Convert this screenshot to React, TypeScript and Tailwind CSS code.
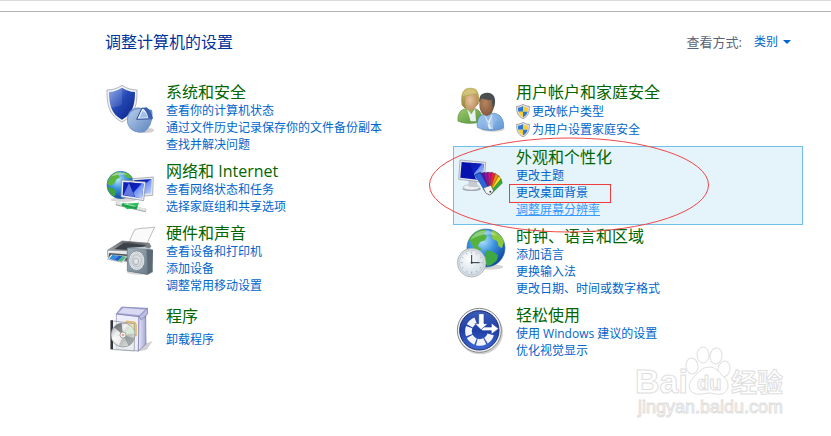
import type { ReactNode } from "react";

const linkClass = "text-[#0066cc] hover:text-[#3399ff] hover:underline";

function Icon({ viewBox, children }: { viewBox: string; children: ReactNode }) {
  return (
    <svg viewBox={viewBox} className="w-12 h-[54px] shrink-0 overflow-visible" aria-hidden="true">
      {children}
    </svg>
  );
}

function Gradients() {
  return (
    <svg className="absolute w-0 h-0" aria-hidden="true">
      <defs>
        <linearGradient id="shield" x1="0" y1="0" x2="1" y2="1">
          <stop offset="0" stopColor="#7f9fe6" />
          <stop offset=".45" stopColor="#2448b4" />
          <stop offset="1" stopColor="#0a1f86" />
        </linearGradient>
        <linearGradient id="pie" x1="0" y1="0" x2="1" y2="1">
          <stop offset="0" stopColor="#b9d0ee" />
          <stop offset="1" stopColor="#5f86bf" />
        </linearGradient>
        <radialGradient id="globe" cx=".4" cy=".3" r=".75">
          <stop offset="0" stopColor="#b5e6fb" />
          <stop offset=".45" stopColor="#3a92de" />
          <stop offset="1" stopColor="#0c3f9c" />
        </radialGradient>
        <linearGradient id="screen" x1="0" y1="0" x2="1" y2="1">
          <stop offset="0" stopColor="#0a1aa0" />
          <stop offset=".45" stopColor="#0d22c4" />
          <stop offset=".5" stopColor="#6f90f0" />
          <stop offset="1" stopColor="#c6d8ff" />
        </linearGradient>
        <linearGradient id="metal" x1="0" y1="0" x2="0" y2="1">
          <stop offset="0" stopColor="#f7f7f7" />
          <stop offset="1" stopColor="#a9adb2" />
        </linearGradient>
        <linearGradient id="printer" x1="0" y1="0" x2="1" y2="0">
          <stop offset="0" stopColor="#a4a9ae" />
          <stop offset=".5" stopColor="#4e545a" />
          <stop offset="1" stopColor="#85898e" />
        </linearGradient>
        <linearGradient id="speaker" x1="0" y1="0" x2="1" y2="1">
          <stop offset="0" stopColor="#a3b1bd" />
          <stop offset="1" stopColor="#6d7d8b" />
        </linearGradient>
        <radialGradient id="cone" cx=".5" cy=".5" r=".5">
          <stop offset="0" stopColor="#9aa3aa" />
          <stop offset=".4" stopColor="#e6eaec" />
          <stop offset=".75" stopColor="#c0c7cc" />
          <stop offset="1" stopColor="#f4f6f7" />
        </radialGradient>
        <linearGradient id="disc" x1="0" y1="0" x2="1" y2="1">
          <stop offset="0" stopColor="#8f9399" />
          <stop offset=".35" stopColor="#f4f4f4" />
          <stop offset=".6" stopColor="#b9bdb9" />
          <stop offset="1" stopColor="#f2f2f4" />
        </linearGradient>
        <linearGradient id="box" x1="0" y1="0" x2="1" y2="0">
          <stop offset="0" stopColor="#e9e9fb" />
          <stop offset="1" stopColor="#a5a6d4" />
        </linearGradient>
        <radialGradient id="faceLight" cx=".4" cy=".4" r=".7">
          <stop offset="0" stopColor="#e6c39b" />
          <stop offset="1" stopColor="#b98a5c" />
        </radialGradient>
        <radialGradient id="faceDark" cx=".4" cy=".4" r=".7">
          <stop offset="0" stopColor="#b58560" />
          <stop offset="1" stopColor="#7c5236" />
        </radialGradient>
        <linearGradient id="hair" x1="0" y1="0" x2="0" y2="1">
          <stop offset="0" stopColor="#c9bb6a" />
          <stop offset="1" stopColor="#96853a" />
        </linearGradient>
        <linearGradient id="green" x1="0" y1="0" x2="1" y2="1">
          <stop offset="0" stopColor="#9ccb6c" />
          <stop offset="1" stopColor="#54913a" />
        </linearGradient>
        <linearGradient id="blue" x1="0" y1="0" x2="1" y2="1">
          <stop offset="0" stopColor="#a9cdf2" />
          <stop offset="1" stopColor="#5f96d4" />
        </linearGradient>
        <radialGradient id="clock" cx=".4" cy=".35" r=".7">
          <stop offset="0" stopColor="#ffffff" />
          <stop offset="1" stopColor="#cfdbe4" />
        </radialGradient>
        <linearGradient id="ease" x1="0" y1="0" x2="0" y2="1">
          <stop offset="0" stopColor="#3c5cb8" />
          <stop offset=".5" stopColor="#1f3fa6" />
          <stop offset="1" stopColor="#3f68d4" />
        </linearGradient>
      </defs>
    </svg>
  );
}

function SecurityIcon() {
  return (
    <Icon viewBox="48 21 144 162">
      <ellipse cx="165" cy="166" rx="28" ry="8" fill="#000" opacity=".18" />
      <path d="M96 31c13 9 28 14 45 14 1 42-6 77-45 96-39-19-46-54-45-96 17 0 32-5 45-14z" fill="#f1f3f6" stroke="#8c929b" strokeWidth="2" />
      <path d="M96 38c12 8 25 12 39 13 0 36-6 66-39 83-33-17-39-47-39-83 14-1 27-5 39-13z" fill="url(#shield)" />
      <path d="M57 51c14-1 27-5 39-13v50c-14 8-27 10-36 9-2-14-3-29-3-46z" fill="#fff" opacity=".12" />
      <path d="M118 110c10-12 26-15 38-11l30 6c5 22-2 50-22 66-20 5-42-2-50-22-4-15-3-29 4-39z" fill="#6d90c4" />
      <circle cx="147" cy="136" r="35" fill="url(#pie)" stroke="#7294c6" strokeWidth="2" />
      <path d="M140 133l16-34c14 2 28 14 31 32z" fill="#dfeafa" stroke="#27499c" strokeWidth="3" />
      <path d="M158 99l11-2c10 5 17 17 18 34l-12-2c-3-14-9-24-17-30z" fill="#3a5eae" />
      <path d="M149 128l9-20c9 4 12 12 15 19z" fill="#9fbfe8" />
    </Icon>
  );
}

function NetworkIcon() {
  return (
    <Icon viewBox="48 258 144 162">
      <ellipse cx="100" cy="374" rx="38" ry="7" fill="#000" opacity=".15" />
      <circle cx="92" cy="330" r="41" fill="url(#globe)" stroke="#3171ae" strokeWidth="2" />
      <path d="M57 311c6-11 15-18 26-21l10 4-8 7 5 6-12 7-4 10-13 8-9-5z" fill="#5cb53c" />
      <path d="M53 337l15 2 11 9-3 12-4 5c-11-6-18-17-19-28z" fill="#3da33c" />
      <path d="M99 291c12 1 22 8 28 17l-14 2-9-8z" fill="#5cb53c" />
      <path d="M64 304c10-12 32-16 47-4-15-4-31-1-47 4z" fill="#fff" opacity=".45" />
      <path d="M127 311l63-5-2 55-48 4z" fill="#e6e8ec" stroke="#8e96a2" strokeWidth="2" />
      <path d="M132 316l53-4-2 43-43 4z" fill="url(#screen)" />
      <path d="M95 315l72 6-6 56-68-11z" fill="#eceef1" stroke="#7f8793" strokeWidth="2" />
      <path d="M100 321l61 5-5 44-58-9z" fill="#0d22bd" />
      <path d="M116 322l45 4-5 44-20-3z" fill="url(#screen)" />
      <path d="M101 359l16-35 17 42z" fill="#91a9ef" opacity=".65" />
      <path d="M78 386l90 21" stroke="#9ca3a5" strokeWidth="10" />
      <path d="M79 384l88 21" stroke="#dfe6e4" strokeWidth="7" />
      <path d="M93 387l54-4-5 15-31 5z" fill="#32bd62" />
      <path d="M97 388l44 11" stroke="#1b9f48" strokeWidth="10" />
      <path d="M101 386l35 8" stroke="#a6efbd" strokeWidth="3" />
    </Icon>
  );
}

function HardwareIcon() {
  return (
    <Icon viewBox="48 9 144 162">
      <ellipse cx="150" cy="155" rx="40" ry="9" fill="#000" opacity=".16" />
      <path d="M134 29c18-7 38-3 60-8-5 13-14 27-22 49l-56 4c4-17 11-30 18-45z" fill="#fafafa" stroke="#999da2" strokeWidth="2" />
      <path d="M54 90l42-27 82 7 5 10-38 22-90 2z" fill="url(#printer)" stroke="#6b7177" strokeWidth="2" />
      <path d="M74 87l28-18 66 6-26 16z" fill="#3b4147" />
      <path d="M52 91l90 2v24l-30 8-58-12z" fill="url(#metal)" stroke="#8a8f94" strokeWidth="2" />
      <path d="M58 99l63 5-6 19-59-12z" fill="#4a5056" />
      <path d="M63 104l50 5-16 18-44-9z" fill="#fff" stroke="#9aa1a7" strokeWidth="2" />
      <path d="M67 105l18 2-14 13-14-3z" fill="#2f8ce0" />
      <path d="M85 107l14 2-15 14-13-3z" fill="#1f5fc4" />
      <path d="M99 109l10 1-14 15-11-2z" fill="#48b77c" />
      <path d="M112 84l52-4 25 9-1 66-15 9-60-11z" fill="#5b6975" />
      <path d="M112 84l58 3 2 76-60-10z" fill="url(#speaker)" stroke="#6d7b88" strokeWidth="2" />
      <path d="M112 84l52-4 25 9-19-2z" fill="#bcc6ce" />
      <ellipse cx="140" cy="122" rx="24" ry="29" fill="#eef1f3" stroke="#74828e" strokeWidth="2" />
      <ellipse cx="140" cy="122" rx="19" ry="24" fill="url(#cone)" stroke="#aab3ba" strokeWidth="2" />
      <ellipse cx="138" cy="124" rx="8" ry="10" fill="#dfe4e7" stroke="#929da5" strokeWidth="2" />
    </Icon>
  );
}

function ProgramsIcon() {
  return (
    <Icon viewBox="48 261 144 162">
      <path d="M160 376l28-10-18 26-30 6z" fill="#000" opacity=".18" />
      <path d="M79 284l68 8-2 104-66-6z" fill="#eeeefa" stroke="#8383b5" strokeWidth="2" />
      <path d="M147 292l20-10 1 93-23 21z" fill="url(#box)" stroke="#6f6fa5" strokeWidth="2" />
      <path d="M95 264l77 4-6 27-22-2-65-8z" fill="#a9a9d3" stroke="#7777ad" strokeWidth="2" />
      <path d="M100 267l66 5-17 16-64-6z" fill="#d9d9f2" />
      <path d="M147 292l25-24 1 17-19 18z" fill="#bcbce2" stroke="#7777ad" strokeWidth="2" />
      <path d="M108 306l27 3 4 8v34l-24-6z" fill="#efc876" stroke="#d6a74c" strokeWidth="2" />
      <path d="M62 305l71 9v82l-71-5z" fill="#e8ebea" fillOpacity=".65" stroke="#8b9094" strokeWidth="2" />
      <path d="M62 304h7v87l-7-1z" fill="#30353b" />
      <circle cx="99" cy="348" r="36" fill="url(#disc)" stroke="#888d91" strokeWidth="2" />
      <path d="M99 348L72 325c7-8 14-11 23-12z" fill="#4f5559" opacity=".65" />
      <path d="M99 348l34 9c-3 11-9 19-17 24z" fill="#7b8587" opacity=".6" />
      <path d="M99 348l22-28c7 6 12 14 13 23z" fill="#d8ebd6" />
      <path d="M99 348l-12 32c-10-5-18-13-21-24z" fill="#fff" opacity=".7" />
      <circle cx="99" cy="348" r="9" fill="#f5f5f5" stroke="#888" strokeWidth="2" />
      <circle cx="99" cy="348" r="4" fill="#e7a98e" />
    </Icon>
  );
}

function UsersIcon() {
  return (
    <Icon viewBox="48 21 144 162">
      <ellipse cx="158" cy="162" rx="36" ry="8" fill="#000" opacity=".18" />
      <path d="M54 138c-2-22 8-35 24-37h24c17 2 25 16 24 38-19 8-55 8-72-1z" fill="url(#green)" stroke="#4f8a39" strokeWidth="2" />
      <path d="M81 101l13 17 11-17 3 38H92z" fill="#e9f1ee" />
      <path d="M65 89c-4-28 1-51 26-51 23 0 29 17 25 48l-13 13-28 1c-3-3-7-6-10-11z" fill="url(#hair)" />
      <path d="M76 63c11 0 23-4 29-9 7 6 9 19 5 35-5 12-11 18-19 18s-14-8-16-20z" fill="url(#faceLight)" />
      <path d="M68 62c3-13 12-20 25-19 10 1 16 6 18 13-10-3-26 6-43 6z" fill="#ded18d" opacity=".6" />
      <path d="M112 157c-3-24 7-38 26-42h25c19 3 29 18 28 43-21 11-56 11-79-1z" fill="url(#blue)" stroke="#5582b8" strokeWidth="2" />
      <path d="M131 117l14 22 12-23 2 45-12 1z" fill="#e7f0fa" />
      <path d="M129 117l-9 18 20 26 6-16zM158 116l14 16-17 32-7-19z" fill="#94bbe7" opacity=".7" />
      <ellipse cx="140" cy="90" rx="22" ry="33" fill="url(#faceDark)" />
      <path d="M118 85c-3-23 8-33 25-32 18 1 26 15 21 38-1 6-4 8-6 9l-3-26c-10 2-20 0-29-4-4 4-7 9-8 15z" fill="#4c4f50" />
    </Icon>
  );
}

function AppearanceIcon() {
  return (
    <Icon viewBox="48 216 144 162">
      <ellipse cx="95" cy="342" rx="28" ry="6" fill="#9caab2" />
      <ellipse cx="94" cy="337" rx="25" ry="8" fill="#eef1f3" stroke="#a6adb3" strokeWidth="2" />
      <path d="M85 314l25 3 4 20-28-2z" fill="#c5cbd0" />
      <path d="M60 255l77 7-4 60-77-9z" fill="#e1e4e8" stroke="#929aa4" strokeWidth="2" />
      <path d="M65 261l66 6-4 49-66-8z" fill="#0711ad" />
      <path d="M88 263l43 4-4 49-19-3z" fill="url(#screen)" />
      <g stroke="#222" strokeWidth="1">
        <path d="M104 300l17-9 35 58-10 10z" fill="#1637b8" />
        <path d="M119 296l15-4 23 59-7 6z" fill="#4b1ea3" />
        <path d="M131 294l14-2 12 61-7 2z" fill="#8d14ae" />
        <path d="M143 292l14 1-2 60-7 2z" fill="#cc127f" />
        <path d="M155 292l13 5-15 57-6 1z" fill="#ea2831" />
        <path d="M166 296l12 7-25 52-5-2z" fill="#f18a16" />
        <path d="M176 303l8 9-31 45-5-4z" fill="#f2de1f" />
        <path d="M183 312l4 12-33 33-5-4z" fill="#31ad36" />
      </g>
      <path d="M106 301l14-7 26 46-13 9z" fill="#2c63d7" />
      <path d="M130 339l23-8 8 17-11 12-12-5z" fill="#f4f4f4" stroke="#555" strokeWidth="2" />
      <circle cx="151" cy="350" r="3" fill="#444" />
    </Icon>
  );
}

function ClockIcon() {
  return (
    <Icon viewBox="48 18 144 162">
      <ellipse cx="145" cy="141" rx="45" ry="8" fill="#000" opacity=".16" />
      <circle cx="138" cy="84" r="57" fill="url(#globe)" stroke="#3268a6" strokeWidth="2" />
      <path d="M87 58c10-17 26-28 44-30l9 5-9 8 10 7-5 13-16 5-7 13 11 8-8 10-14-11-6-13z" fill="#55b23b" />
      <path d="M157 31c15 6 29 18 35 33l-6 21-10-6-4-15-14-7-4-15z" fill="#8ac93f" />
      <path d="M140 90l19 5 15 11-4 16-17 14-12 2-9-18z" fill="#3ea944" />
      <path d="M92 59c16-31 57-37 80-11-27-10-53-5-80 11z" fill="#fff" opacity=".35" />
      <circle cx="95" cy="128" r="43" fill="#dbe2e7" stroke="#949fa8" strokeWidth="2" />
      <circle cx="95" cy="128" r="37" fill="url(#clock)" stroke="#b4bec6" strokeWidth="2" />
      <path d="M95 95v6M95 155v6M62 128h6M122 128h6M79 99l2 4M111 99l-2 4M66 112l4 2M124 112l-4 2M66 144l4-2M124 144l-4-2M79 157l2-4M111 157l-2-4" stroke="#8d98a0" strokeWidth="2" />
      <path d="M95 105v23h24" fill="none" stroke="#28343d" strokeWidth="3" />
      <circle cx="95" cy="128" r="3" fill="#28343d" />
    </Icon>
  );
}

function EaseIcon() {
  return (
    <Icon viewBox="48 255 144 162">
      <ellipse cx="121" cy="337" rx="68" ry="66" fill="#000" opacity=".18" />
      <circle cx="118" cy="331" r="66" fill="#f2f3f5" stroke="#84888e" strokeWidth="3" />
      <circle cx="118" cy="331" r="59" fill="url(#ease)" stroke="#172a70" strokeWidth="3" />
      <path d="M152 343A34 34 0 1 1 109 301" fill="none" stroke="#f2f4f8" strokeWidth="20" strokeDasharray="24 4" />
      <path d="M116 281h16v30h11l-19 19-19-19h11z" fill="#fff" stroke="#2444a4" strokeWidth="2" />
      <path d="M132 321h22v-12l22 17-22 17v-11h-26l-4-4z" fill="#fff" stroke="#2444a4" strokeWidth="2" />
    </Icon>
  );
}

function UacShield() {
  return (
    <svg viewBox="0 0 42 45" className="w-3.5 h-[15px] shrink-0" aria-hidden="true">
      <path d="M21 1c6 4 12 6 19 6 1 17-3 30-19 37C5 37 1 24 2 7c7 0 13-2 19-6z" fill="#e4e6e8" stroke="#777d84" strokeWidth="2" />
      <path d="M21 6v17H7c-1-4-1-8-1-12 6 0 10-2 15-5z" fill="#2c78cf" />
      <path d="M21 6c5 3 9 5 15 5 0 4 0 8-1 12H21z" fill="#f9cf35" />
      <path d="M7 23h14v17C13 36 9 30 7 23z" fill="#f9cf35" />
      <path d="M21 23h14c-2 7-6 13-14 17z" fill="#2c78cf" />
    </svg>
  );
}

type CategoryProps = {
  icon: ReactNode;
  title: string;
  className?: string;
  listClassName?: string;
  children: ReactNode;
};

function Category({ icon, title, className = "", listClassName = "", children }: CategoryProps) {
  return (
    <section className={`flex gap-3 ${className}`}>
      {icon}
      <div className="whitespace-nowrap">
        <h2 className="text-base leading-5">
          <a href="#" className="text-[#006600]">
            {title}
          </a>
        </h2>
        <ul className={`text-xs leading-[17px] ${listClassName}`}>{children}</ul>
      </div>
    </section>
  );
}

function Task({ children }: { children: ReactNode }) {
  return (
    <li>
      <a href="#" className={`block w-fit ${linkClass}`}>
        {children}
      </a>
    </li>
  );
}

function AdminTask({ children }: { children: ReactNode }) {
  return (
    <li>
      <a href="#" className={`flex w-fit items-center gap-0.5 h-[18px] ${linkClass}`}>
        <UacShield />
        {children}
      </a>
    </li>
  );
}

function Watermark() {
  return (
    <svg
      viewBox="0 0 156 76"
      className="w-[156px] h-[76px] text-[#dedede]"
      fill="#fff"
      stroke="currentColor"
      strokeWidth="1"
      fontFamily='"Liberation Sans", "Noto Sans CJK SC", sans-serif'
    >
      <ellipse cx="59" cy="22" rx="6" ry="8" transform="rotate(-8 59 22)" />
      <ellipse cx="70" cy="11" rx="6" ry="8" />
      <ellipse cx="83" cy="12" rx="6" ry="8" transform="rotate(8 83 12)" />
      <ellipse cx="91" cy="25" rx="6" ry="8" transform="rotate(12 91 25)" />
      <path d="M76 23c8 0 11 7 16 11 5 5 4 15-4 16-5 1-8-1-12-1s-8 2-12 1c-9-1-10-10-4-16 5-5 9-11 16-11z" />
      <text x="2" y="49" fontSize="34" fontWeight="700">Bai</text>
      <text x="64" y="46" fontSize="20" fontWeight="700">du</text>
      <text x="98" y="48" fontSize="26" fontWeight="700">经验</text>
      <text x="5" y="69" fontSize="18">jingyan.baidu.com</text>
    </svg>
  );
}

export default function App() {
  return (
    <div
      lang="zh-CN"
      className="min-h-screen bg-white overflow-hidden font-['Open_Sans','Noto_Sans_CJK_SC',sans-serif]"
    >
      <Gradients />
      <div className="h-3 border-t border-t-[#d9d9d9] border-b border-b-[#b4b4b4]" />

      <header className="flex items-center justify-between pl-[105px] pr-10 pt-[18px]">
        <h1 className="text-base leading-6 text-[#003399]">调整计算机的设置</h1>
        <div className="flex items-center gap-3 leading-6">
          <label htmlFor="view" className="text-[13px] text-[#5a6478]">
            查看方式:
          </label>
          <div className="relative flex items-center">
            <select id="view" className="appearance-none bg-transparent pr-3 text-xs text-[#0066cc]">
              <option>类别</option>
            </select>
            <svg viewBox="0 0 8 4" className="absolute right-0 w-2 h-1 pointer-events-none" aria-hidden="true">
              <path d="M0 0h8L4 4z" fill="#0066cc" />
            </svg>
          </div>
        </div>
      </header>

      <main className="grid grid-cols-2 pl-[106px] pr-[25px] pt-7">
        <div className="flex flex-col gap-2">
          <Category icon={<SecurityIcon />} title="系统和安全">
            <Task>查看你的计算机状态</Task>
            <Task>通过文件历史记录保存你的文件备份副本</Task>
            <Task>查找并解决问题</Task>
          </Category>
          <Category icon={<NetworkIcon />} title="网络和 Internet">
            <Task>查看网络状态和任务</Task>
            <Task>选择家庭组和共享选项</Task>
          </Category>
          <Category icon={<HardwareIcon />} title="硬件和声音">
            <Task>查看设备和打印机</Task>
            <Task>添加设备</Task>
            <Task>调整常用移动设置</Task>
          </Category>
          <Category icon={<ProgramsIcon />} title="程序" className="mt-1" listClassName="mt-[5px]">
            <Task>卸载程序</Task>
          </Category>
        </div>

        <div className="flex flex-col gap-2">
          <Category icon={<UsersIcon />} title="用户帐户和家庭安全">
            <AdminTask>更改帐户类型</AdminTask>
            <AdminTask>为用户设置家庭安全</AdminTask>
          </Category>

          {/* Selected category, with the hand-drawn marks over it */}
          <div className="relative -ml-[3px] mr-[3px] -mb-[7px] pl-[2px] pb-[6px] border border-[#70c0e7] bg-[#e5f3fb]">
            <Category icon={<AppearanceIcon />} title="外观和个性化">
              <Task>更改主题</Task>
              <li className="relative">
                <a href="#" className={`block w-fit ${linkClass}`}>
                  更改桌面背景
                </a>
                <span className="absolute -left-[7px] top-0 w-[102px] h-[19px] border border-[#f03c3c] pointer-events-none" />
              </li>
              <li>
                <a href="#" className="block w-fit text-[#3399ff] underline">
                  调整屏幕分辨率
                </a>
              </li>
            </Category>
            <svg
              viewBox="0 0 282 97"
              className="absolute z-10 -left-[26px] -top-[10px] w-[282px] h-[97px] pointer-events-none"
              aria-hidden="true"
            >
              <ellipse cx="141" cy="48" rx="139.5" ry="47" fill="none" stroke="#f04848" />
            </svg>
          </div>

          <Category icon={<ClockIcon />} title="时钟、语言和区域">
            <Task>添加语言</Task>
            <Task>更换输入法</Task>
            <Task>更改日期、时间或数字格式</Task>
          </Category>
          <Category icon={<EaseIcon />} title="轻松使用">
            <Task>使用 Windows 建议的设置</Task>
            <Task>优化视觉显示</Task>
          </Category>
        </div>
      </main>

      <footer className="flex justify-end pr-[42px] -mt-4">
        <Watermark />
      </footer>
    </div>
  );
}
